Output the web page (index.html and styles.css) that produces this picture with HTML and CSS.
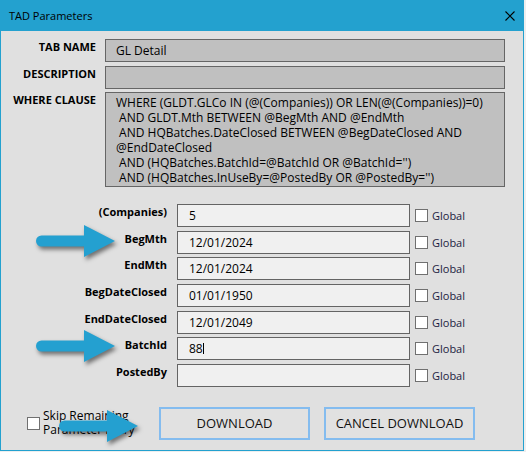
FILE: index.html
```html
<!DOCTYPE html>
<html lang="en">
<head>
  <meta charset="UTF-8">
  <title>TAD Parameters</title>
  <link rel="stylesheet" href="styles.css">
</head>
<body>
<div class="window">
  <div class="titlebar">
    <span class="title">TAD Parameters</span>
    <svg class="close" width="10" height="10" viewBox="0 0 10 10">
      <path d="M0.5 0.5 L9.5 9.5 M9.5 0.5 L0.5 9.5" stroke="#000" stroke-width="1.1" fill="none"/>
    </svg>
  </div>

  <div class="dialog">
    <div class="info">
      <div class="info-label">TAB NAME</div>
      <div class="info-field">GL Detail</div>
      <div class="info-label">DESCRIPTION</div>
      <div class="info-field"></div>
      <div class="info-label">WHERE CLAUSE</div>
      <div class="info-field where">WHERE (GLDT.GLCo IN (@(Companies)) OR LEN(@(Companies))=0)
 AND GLDT.Mth BETWEEN @BegMth AND @EndMth
 AND HQBatches.DateClosed BETWEEN @BegDateClosed AND
@EndDateClosed
 AND (HQBatches.BatchId=@BatchId OR @BatchId='')
 AND (HQBatches.InUseBy=@PostedBy OR @PostedBy='')</div>
    </div>

    <div class="params">
      <div class="param-row">
        <div class="param-label">(Companies)</div>
        <div class="param-input">5</div>
        <span class="check"></span><span class="global">Global</span>
      </div>
      <div class="param-row">
        <div class="param-label">BegMth</div>
        <div class="param-input">12/01/2024</div>
        <span class="check"></span><span class="global">Global</span>
      </div>
      <div class="param-row">
        <div class="param-label">EndMth</div>
        <div class="param-input">12/01/2024</div>
        <span class="check"></span><span class="global">Global</span>
      </div>
      <div class="param-row">
        <div class="param-label">BegDateClosed</div>
        <div class="param-input">01/01/1950</div>
        <span class="check"></span><span class="global">Global</span>
      </div>
      <div class="param-row">
        <div class="param-label">EndDateClosed</div>
        <div class="param-input">12/01/2049</div>
        <span class="check"></span><span class="global">Global</span>
      </div>
      <div class="param-row">
        <div class="param-label">BatchId</div>
        <div class="param-input">88<span class="caret"></span></div>
        <span class="check"></span><span class="global">Global</span>
      </div>
      <div class="param-row">
        <div class="param-label">PostedBy</div>
        <div class="param-input"></div>
        <span class="check"></span><span class="global">Global</span>
      </div>
    </div>

    <div class="footer">
      <div class="skip">
        <span class="check"></span>
        <span class="skip-text">Skip Remaining<br>Parameter Entry</span>
      </div>
      <button class="btn">DOWNLOAD</button>
      <button class="btn">CANCEL DOWNLOAD</button>
    </div>
  </div>

  <!-- callout arrows -->
  <svg class="arrow arrow-beg" width="80" height="32" viewBox="0 0 80 32">
    <line x1="5.5" y1="16" x2="50" y2="16" stroke="#24a0d0" stroke-width="11" stroke-linecap="round"/>
    <polygon points="48,0 79,16 48,32" fill="#24a0d0"/>
  </svg>
  <svg class="arrow arrow-batch" width="80" height="32" viewBox="0 0 80 32">
    <line x1="5.5" y1="16" x2="50" y2="16" stroke="#24a0d0" stroke-width="11" stroke-linecap="round"/>
    <polygon points="48,0 79,16 48,32" fill="#24a0d0"/>
  </svg>
  <svg class="arrow arrow-download" width="80" height="32" viewBox="0 0 80 32">
    <line x1="5.5" y1="16" x2="50" y2="16" stroke="#24a0d0" stroke-width="11" stroke-linecap="round"/>
    <polygon points="48,0 79,16 48,32" fill="#24a0d0"/>
  </svg>
</div>
</body>
</html>
```

FILE: styles.css
```css
html, body {
  margin: 0;
}

body {
  background: #eeeeee;
  font-family: 'Open Sans', 'Noto Sans', sans-serif;
  color: #000;
}

.window {
  position: relative;
  width: 524px;
  height: 451px;
  box-sizing: border-box;
  background: #23a1cf; /* window frame */
  padding: 0 1px 1px;
  display: flex;
  flex-direction: column;
}

.titlebar {
  height: 31px;
  display: flex;
  align-items: center;
  justify-content: space-between;
  padding: 0 8px 0 8px;
  font-size: 11px;
}

.close {
  display: block;
}

.dialog {
  flex: 1;
  background: #e0e0e0;
  padding-top: 8px;
}

/* top read-only fields */
.info {
  display: grid;
  grid-template-columns: 95px 400px;
  grid-template-rows: 23px 23px 95px;
  column-gap: 9px;
  row-gap: 3.5px;
}

.info-label {
  text-align: right;
  font-weight: 700;
  font-size: 11px;
  line-height: 15px;
}

.info-field {
  background: #c0c0c0;
  border: 1px solid #666666;
  box-sizing: border-box;
  padding: 3px 10px 0;
  font-size: 12px;
  line-height: 15px;
}

.info-field.where {
  padding-top: 2px;
  white-space: pre;
  overflow: hidden;
}

/* parameter rows */
.params {
  margin-top: 17px;
  display: flex;
  flex-direction: column;
  gap: 3.67px;
}

.param-row {
  display: flex;
  align-items: flex-start;
  height: 23px;
}

.param-label {
  width: 166px;
  text-align: right;
  font-weight: 700;
  font-size: 11px;
  line-height: 15px;
}

.param-input {
  width: 233px;
  height: 23px;
  margin-left: 10px;
  box-sizing: border-box;
  border: 1px solid #646464;
  background: #f0f0f0;
  padding: 0 11px;
  font-size: 12px;
  line-height: 21px;
}

.caret {
  display: inline-block;
  width: 1px;
  height: 11px;
  background: #000;
  vertical-align: -1px;
}

.check {
  display: inline-block;
  width: 13px;
  height: 13px;
  box-sizing: border-box;
  border: 1px solid #707070;
  background: #ffffff;
}

.param-row .check {
  align-self: center;
  margin-left: 5px;
}

.global {
  align-self: center;
  margin-left: 4px;
  font-size: 11px;
  color: #1c1c40;
}

/* bottom bar */
.footer {
  margin-top: 20px;
  display: flex;
  align-items: center;
  gap: 14px;
  padding-left: 26px;
}

.skip {
  width: 118px;
  display: flex;
  align-items: center;
  gap: 3px;
}

.skip-text {
  font-size: 12px;
  line-height: 14px;
}

.btn {
  width: 151px;
  height: 33px;
  box-sizing: border-box;
  border: 2px solid #84bcef;
  background: #e1e1e1;
  font-family: inherit;
  font-size: 13px;
  color: #111;
  padding: 0;
  white-space: nowrap;
}

/* callout arrows lying over the form */
.arrow {
  position: absolute;
  filter: drop-shadow(2px 3px 2px rgba(0, 0, 0, 0.5));
}

.arrow-beg {
  left: 36px;
  top: 225px;
}

.arrow-batch {
  left: 36px;
  top: 330px;
}

.arrow-download {
  left: 59px;
  top: 410px;
}
```
